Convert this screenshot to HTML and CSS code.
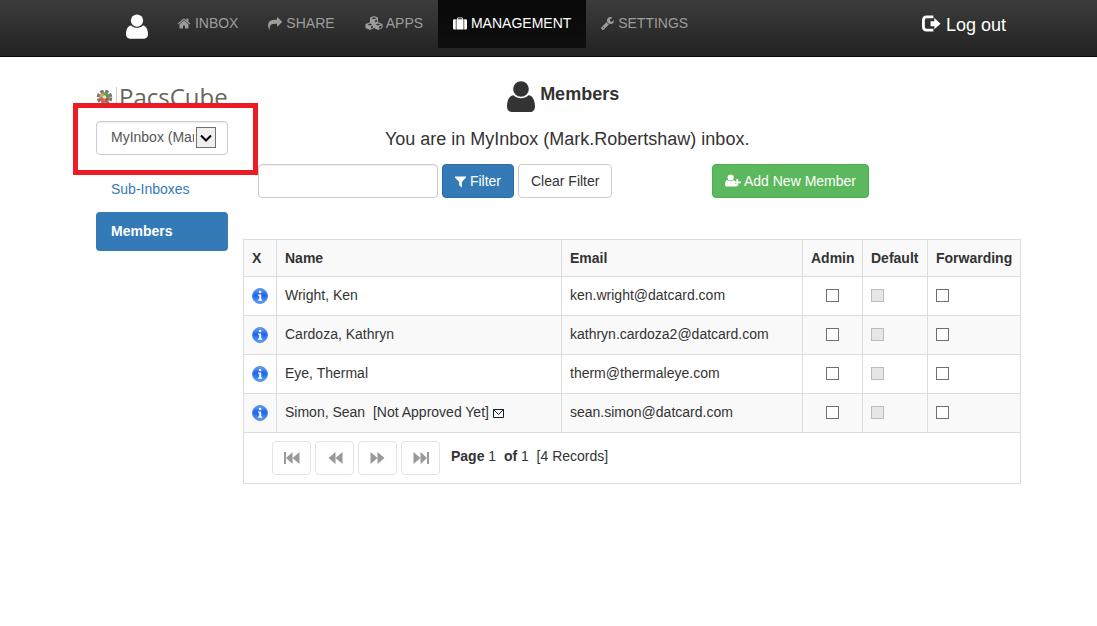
FILE: index.html
```html
<!DOCTYPE html>
<html lang="en">
<head>
    <meta charset="UTF-8">
    <meta name="viewport" content="width=device-width, initial-scale=1.0">
    <title>PacsCube - Members</title>
    <link rel="stylesheet" href="styles.css">
</head>
<body>
    <!-- shared icons -->
    <svg class="sprite" aria-hidden="true">
        <symbol id="icon-user" viewBox="0 0 28 31">
            <circle cx="14" cy="8" r="7.8"/>
            <path d="M6.5 14.2C9 16.5 11 17.2 14 17.2s5-.7 7.500-3C26 14.500 28 20 28 25.500c0 3.500-2 5.500-5 5.500H5c-3 0-5-2-5-5.500C0 20 2 14.500 6.500 14.200z"/>
        </symbol>
        <symbol id="icon-info" viewBox="0 0 16 16">
            <circle cx="8" cy="8" r="7.500" fill="url(#blue)" stroke="#5b8fe0" stroke-width="1"/>
            <path d="M7 3h2.200v2H7zM6 6.500h3.200v5H10.200v1.200H6v-1.200h1.200V7.700H6z" fill="#fff"/>
        </symbol>
        <linearGradient id="blue" x1="0" y1="0" x2="0" y2="1">
            <stop offset="0" stop-color="#6fa4f2"/>
            <stop offset="0.450" stop-color="#1b62ee"/>
            <stop offset="1" stop-color="#5fa4fb"/>
        </linearGradient>
    </svg>

    <header class="navbar">
        <div class="container navbar-inner">
            <a class="brand" href="#" aria-label="Profile"><svg class="icon-brand"><use href="#icon-user"/></svg></a>
            <nav>
                <ul class="nav">
                    <li><a href="#"><svg class="icon" viewBox="60 200 1680 1400"><path d="M1408 992v480q0 26-19 45t-45 19h-384v-384h-256v384h-384q-26 0-45-19t-19-45v-480q0-1 .5-3t.5-3l575-474 575 474q1 2 1 6zm223-69l-62 74q-8 9-21 11h-3q-13 0-21-7l-692-577-692 577q-12 8-24 7-13-2-21-11l-62-74q-8-10-7-23.500t11-21.500l719-599q32-26 76-26t76 26l244 204v-195q0-14 9-23t23-9h192q14 0 23 9t9 23v408l219 182q10 8 11 21.500t-7 23.500z"/></svg> INBOX</a></li>
                    <li><a href="#"><svg class="icon icon-md" viewBox="0 100 1792 1500"><path d="M1792 640q0 26-19 45l-512 512q-19 19-45 19t-45-19-19-45v-256h-224q-98 0-175.500 6t-154 21.500-133 42.500-105.500 69.500-80 101-48.500 138.500-17.500 181q0 55 5 123 0 6 2.500 23.500t2.500 26.500q0 15-8.500 25t-23.500 10q-16 0-28-17-7-9-13-22t-13.500-30-10.500-24q-127-285-127-451 0-199 53-333 162-403 875-403h224v-256q0-26 19-45t45-19 45 19l512 512q19 19 19 45z"/></svg> SHARE</a></li>
                    <li><a href="#"><svg class="icon icon-lg" viewBox="0 0 18 14"><path d="M9 0l4 1.600v4.600l4.500 1.800v4L13 14l-4-2-4 2-4.500-2V8L5 6.200V1.600z"/><path class="cut" d="M6.500 2.300L9 1.300l2.500 1L9 3.300zM10 4.400l2-.8v2l-2 .9zM2.500 8.600L5 7.600l2.500 1L5 9.600zM10.500 8.600L13 7.600l2.500 1-2.500 1zM6 10.600l2-.8v1.700l-2 1zM14 10.600l2.500-1v2L14 12.700z"/></svg> APPS</a></li>
                    <li><a class="active" href="#"><svg class="icon icon-md" viewBox="0 0 15 13"><path fill-rule="evenodd" d="M4.500 2V1q0-1 1-1h4q1 0 1 1v1H11.300v11H3.700V2zM5.500 2h4V1h-4zM3 2v11H1.500Q0 13 0 11.500v-8Q0 2 1.500 2zM12 2h1.500Q15 2 15 3.500v8q0 1.500-1.500 1.500H12z"/></svg> MANAGEMENT</a></li>
                    <li><a href="#"><svg class="icon" viewBox="80 128 1650 1650"><path d="M448 1472q0-26-19-45t-45-19-45 19-19 45 19 45 45 19 45-19 19-45zm644-420l-682 682q-37 37-90 37-52 0-91-37l-106-108q-38-36-38-90 0-53 38-91l681-681q39 98 114.500 173.500t173.500 114.500zm634-435q0 39-23 106-47 134-164.500 217.500t-258.500 83.500q-185 0-316.500-131.500t-131.500-316.500 131.500-316.500 316.500-131.500q58 0 121.500 16.500t107.500 46.500q16 11 16 28t-16 28l-293 169v224l193 107q5-3 79-48.500t135.500-81 70.500-35.500q15 0 23.500 10t8.500 25z"/></svg> SETTINGS</a></li>
                </ul>
            </nav>
            <a class="logout" href="#"><svg class="icon-logout" viewBox="0 0 20 17"><path d="M12 1.500H5Q1.500 1.500 1.500 5v7q0 3.500 3.500 3.500h7" fill="none" stroke="currentColor" stroke-width="3"/><path d="M9 6h4V2.800L19.500 8.800 13 14.500V11.500H9z"/></svg> Log out</a>
        </div>
    </header>

    <div class="page">
        <div class="container layout">
            <aside class="sidebar">
                <div class="logo">
                    <svg class="logo-mark" viewBox="0 0 18 18">
                        <circle cx="9" cy="9" r="6.500" fill="none" stroke="#77776d" stroke-width="3.500" stroke-dasharray="3.400 1.700"/>
                        <circle cx="9" cy="9" r="5.500" fill="#8a8a80"/>
                        <path d="M4 6l4-1.500v4L4 9z" fill="#e8a33a"/>
                        <path d="M9 4.500L14 6v3L9 8z" fill="#4aa54a"/>
                        <path d="M4 10l4-1v5L5 12z" fill="#f05a28"/>
                        <path d="M10 9.500l4 .5-2 3-2 1z" fill="#d8432c"/>
                        <circle cx="9" cy="8.500" r="1.800" fill="#e6e9e2"/>
                    </svg>
                    <span class="logo-text">PacsCube</span>
                </div>
                <div class="inbox-picker">
                    <select class="form-control inbox-select" aria-label="Inbox">
                        <option>MyInbox (Mark.Robertshaw)</option>
                    </select>
                    <span class="arrow"><svg viewBox="0 0 12 8"><path d="M1 1.500l5 5 5-5" fill="none" stroke="#000" stroke-width="2"/></svg></span>
                    <div class="highlight"></div>
                </div>
                <ul class="pills">
                    <li><a href="#">Sub-Inboxes</a></li>
                    <li><a class="active" href="#">Members</a></li>
                </ul>
            </aside>

            <main class="main">
                <div class="heading">
                    <h1><svg class="icon-title"><use href="#icon-user"/></svg> Members</h1>
                    <p>You are in MyInbox (Mark.Robertshaw) inbox.</p>
                </div>

                <form class="toolbar">
                    <div class="filter">
                        <input class="form-control" type="text" aria-label="Filter members">
                        <button class="btn btn-primary" type="button"><svg class="icon-filter" viewBox="0 0 12 12"><path d="M0 0h12v1L7.500 6v6L4.500 9.500V6L0 1z"/></svg> Filter</button>
                        <button class="btn" type="button">Clear Filter</button>
                    </div>
                    <div class="add">
                        <button class="btn btn-success" type="button"><svg class="icon-add" viewBox="0 0 17 13"><circle cx="6" cy="3.300" r="3.300"/><path d="M2.500 6Q6 8.500 9.500 6l1 .8V10h2v3H2Q0 13 0 11q0-4.800 2.500-5z"/><path d="M12 5h2v2.500h3v2h-3V12h-2V9.500H9.500v-2H12z"/></svg> Add New Member</button>
                    </div>
                </form>

                <table class="members">
                    <thead>
                        <tr>
                            <th class="col-x">X</th>
                            <th class="col-name">Name</th>
                            <th>Email</th>
                            <th class="col-admin">Admin</th>
                            <th class="col-default">Default</th>
                            <th class="col-forward">Forwarding</th>
                        </tr>
                    </thead>
                    <tbody>
                        <tr>
                            <td><svg class="icon-info"><use href="#icon-info"/></svg></td>
                            <td>Wright, Ken</td>
                            <td>ken.wright@datcard.com</td>
                            <td class="center"><input type="checkbox" aria-label="Admin"></td>
                            <td><input type="checkbox" aria-label="Default" disabled></td>
                            <td><input type="checkbox" aria-label="Forwarding"></td>
                        </tr>
                        <tr>
                            <td><svg class="icon-info"><use href="#icon-info"/></svg></td>
                            <td>Cardoza, Kathryn</td>
                            <td>kathryn.cardoza2@datcard.com</td>
                            <td class="center"><input type="checkbox" aria-label="Admin"></td>
                            <td><input type="checkbox" aria-label="Default" disabled></td>
                            <td><input type="checkbox" aria-label="Forwarding"></td>
                        </tr>
                        <tr>
                            <td><svg class="icon-info"><use href="#icon-info"/></svg></td>
                            <td>Eye, Thermal</td>
                            <td>therm@thermaleye.com</td>
                            <td class="center"><input type="checkbox" aria-label="Admin"></td>
                            <td><input type="checkbox" aria-label="Default" disabled></td>
                            <td><input type="checkbox" aria-label="Forwarding"></td>
                        </tr>
                        <tr>
                            <td><svg class="icon-info"><use href="#icon-info"/></svg></td>
                            <td>Simon, Sean &nbsp;[Not Approved Yet] <svg class="icon-mail" viewBox="0 0 11 9"><path d="M.5.5h10v8H.5zM.5.5l5 5 5-5" fill="#fff" stroke="#12212b"/></svg></td>
                            <td>sean.simon@datcard.com</td>
                            <td class="center"><input type="checkbox" aria-label="Admin"></td>
                            <td><input type="checkbox" aria-label="Default" disabled></td>
                            <td><input type="checkbox" aria-label="Forwarding"></td>
                        </tr>
                    </tbody>
                    <tfoot>
                        <tr>
                            <td colspan="6">
                                <div class="pager">
                                    <button class="btn" type="button" aria-label="First page" disabled><svg viewBox="0 0 16 12"><path d="M0 0h2v12H0zM8.500 0v12L2 6zM15.500 0v12L8.500 6z"/></svg></button>
                                    <button class="btn" type="button" aria-label="Previous page" disabled><svg viewBox="0 0 16 12"><path d="M8.500 0v12L1.500 6zM15.500 0v12L8.500 6z"/></svg></button>
                                    <button class="btn" type="button" aria-label="Next page" disabled><svg viewBox="0 0 16 12"><path d="M.5 0v12L7.500 6zM7.500 0v12L14.500 6z"/></svg></button>
                                    <button class="btn" type="button" aria-label="Last page" disabled><svg viewBox="0 0 16 12"><path d="M.5 0v12L7.500 6zM7.500 0v12L14 6zM14 0h2v12h-2z"/></svg></button>
                                    <span class="pager-text"><b>Page</b> 1 &nbsp;<b>of</b> 1 &nbsp;[4 Records]</span>
                                </div>
                            </td>
                        </tr>
                    </tfoot>
                </table>
            </main>
        </div>
    </div>
</body>
</html>
```
FILE: styles.css
```css
* {
    box-sizing: border-box;
}

body {
    margin: 0;
    background: #fff;
    color: #333;
    font-family: "Liberation Sans", Arial, sans-serif;
    font-size: 14px;
    line-height: 20px;
}

ul {
    list-style: none;
    margin: 0;
    padding: 0;
}

a {
    color: #337ab7;
    text-decoration: none;
}

svg {
    fill: currentColor;
}

.sprite {
    position: absolute;
    width: 0;
    height: 0;
}

.navbar,
.page {
    padding-left: 5px;
}

.container {
    max-width: 970px;
    margin: 0 auto;
    padding: 0 15px;
}

/* navbar */
.navbar {
    background: linear-gradient(#3c3c3c, #222);
    border-bottom: 1px solid #080808;
}

.navbar-inner {
    display: flex;
    align-items: flex-start;
    min-height: 56px;
}

.brand {
    padding: 14px 15px 0 45px;
    color: #fff;
}

.icon-brand {
    display: block;
    width: 22px;
    height: 25px;
}

.nav {
    display: flex;
}

.nav a {
    display: block;
    padding: 13px 15px 15px;
    color: #9d9d9d;
    white-space: nowrap;
}

.nav a.active {
    color: #fff;
    background: linear-gradient(#080808, #0f0f0f);
}

.icon {
    width: 13px;
    height: 13px;
    vertical-align: -2px;
}

.icon-md {
    width: 14px;
}

.icon-lg {
    width: 18px;
    height: 14px;
}

.cut {
    fill: #333;
}

.logout {
    margin-left: auto;
    padding: 15px 15px 0 0;
    color: #fff;
    font-size: 18px;
}

.icon-logout {
    width: 19px;
    height: 17px;
    vertical-align: -1px;
}

/* page layout */
.layout {
    display: flex;
    padding-top: 22px;
}

.sidebar {
    flex: 0 0 162px;
    padding-right: 15px;
    padding-left: 15px;
}

.main {
    flex: 1;
    min-width: 0;
}

/* sidebar */
.logo {
    display: flex;
    align-items: center;
    gap: 3px;
    height: 36px;
    margin-bottom: 6px;
}

.logo-mark {
    flex: none;
    width: 17px;
    height: 17px;
}

.logo-text {
    padding-left: 2px;
    border-left: 1px solid #ccc;
    color: #66665a;
    font-family: "Open Sans", sans-serif;
    font-size: 24px;
}

.form-control {
    height: 34px;
    border: 1px solid #ccc;
    border-radius: 4px;
    background: #fff;
    box-shadow: inset 0 1px 1px rgba(0, 0, 0, 0.075);
    color: #555;
    font: inherit;
}

.inbox-picker {
    position: relative;
}

.inbox-select {
    display: block;
    width: 100%;
    padding: 0 33px 2px 14px;
    appearance: none;
}

.arrow {
    position: absolute;
    top: 6px;
    right: 12px;
    display: flex;
    align-items: center;
    justify-content: center;
    width: 20px;
    height: 21px;
    border: 1px solid #707070;
    background: #f0f0f0;
    pointer-events: none;
}

.arrow svg {
    width: 12px;
    height: 8px;
}

/* red frame around the inbox picker */
.highlight {
    position: absolute;
    inset: -18px -30px -20px -23px;
    border: 5px solid #ed1c24;
    pointer-events: none;
}

.pills {
    margin-top: 14px;
}

.pills li + li {
    margin-top: 3px;
}

.pills a {
    display: block;
    padding: 10px 15px;
    border-radius: 4px;
}

.pills a.active {
    padding-top: 9px;
    background: #337ab7;
    color: #fff;
    font-weight: bold;
}

/* heading */
.heading {
    width: 83.33%;
    text-align: center;
    font-size: 18px;
}

h1 {
    display: flex;
    justify-content: center;
    gap: 5px;
    margin: 0;
    padding: 2px 8px 0 0;
    font-size: 18px;
    line-height: 27px;
}

.icon-title {
    width: 28px;
    height: 31px;
}

.heading p {
    margin: 17px 0 15px;
}

/* toolbar */
.toolbar {
    display: grid;
    grid-template-columns: 7fr 5fr;
    margin-bottom: 41px;
}

.filter {
    display: flex;
    gap: 4px;
    padding-left: 15px;
}

.filter .form-control {
    width: 180px;
    padding: 6px 12px;
}

.add {
    padding-left: 15px;
}

.btn {
    height: 34px;
    padding: 0 12px;
    border: 1px solid #ccc;
    border-radius: 4px;
    background: #fff;
    color: #333;
    font: inherit;
    white-space: nowrap;
    cursor: pointer;
}

.btn-primary {
    background: #337ab7;
    border-color: #2e6da4;
    color: #fff;
}

.btn-success {
    background: #5cb85c;
    border-color: #4cae4c;
    color: #fff;
}

.icon-filter {
    width: 11px;
    height: 12px;
    vertical-align: -2px;
}

.icon-add {
    width: 16px;
    height: 13px;
    vertical-align: -1px;
}

/* members table */
.members {
    width: 100%;
    border-collapse: collapse;
    table-layout: fixed;
}

.members th,
.members td {
    padding: 8px;
    border: 1px solid #ddd;
    text-align: left;
    vertical-align: top;
}

.members tbody td {
    padding-bottom: 10px;
}

.members th,
.members tbody tr:nth-child(even) {
    background: #f9f9f9;
}

.members td.center {
    text-align: center;
}

.col-x {
    width: 33px;
}

.col-name {
    width: 285px;
}

.col-admin {
    width: 60px;
}

.col-default {
    width: 65px;
}

.col-forward {
    width: 93px;
}

.icon-info {
    display: block;
    width: 16px;
    height: 16px;
    margin-top: 3px;
}

.icon-mail {
    width: 11px;
    height: 9px;
    vertical-align: -1px;
}

input[type="checkbox"] {
    display: inline-block;
    width: 13px;
    height: 13px;
    margin: 0;
    appearance: none;
    border: 1px solid #707070;
    background: #fff;
    vertical-align: -2px;
}

input[type="checkbox"]:disabled {
    border-color: #bcbcbc;
    background: #e6e6e6;
}

/* pager */
.pager {
    display: flex;
    gap: 4px;
    padding-left: 20px;
}

.pager .btn {
    width: 39px;
    padding: 0;
    border-color: #e3e3e3;
    color: #999;
}

.pager svg {
    display: block;
    width: 16px;
    height: 12px;
    margin: 0 auto;
}

.pager-text {
    padding: 5px 0 0 7px;
}
```
